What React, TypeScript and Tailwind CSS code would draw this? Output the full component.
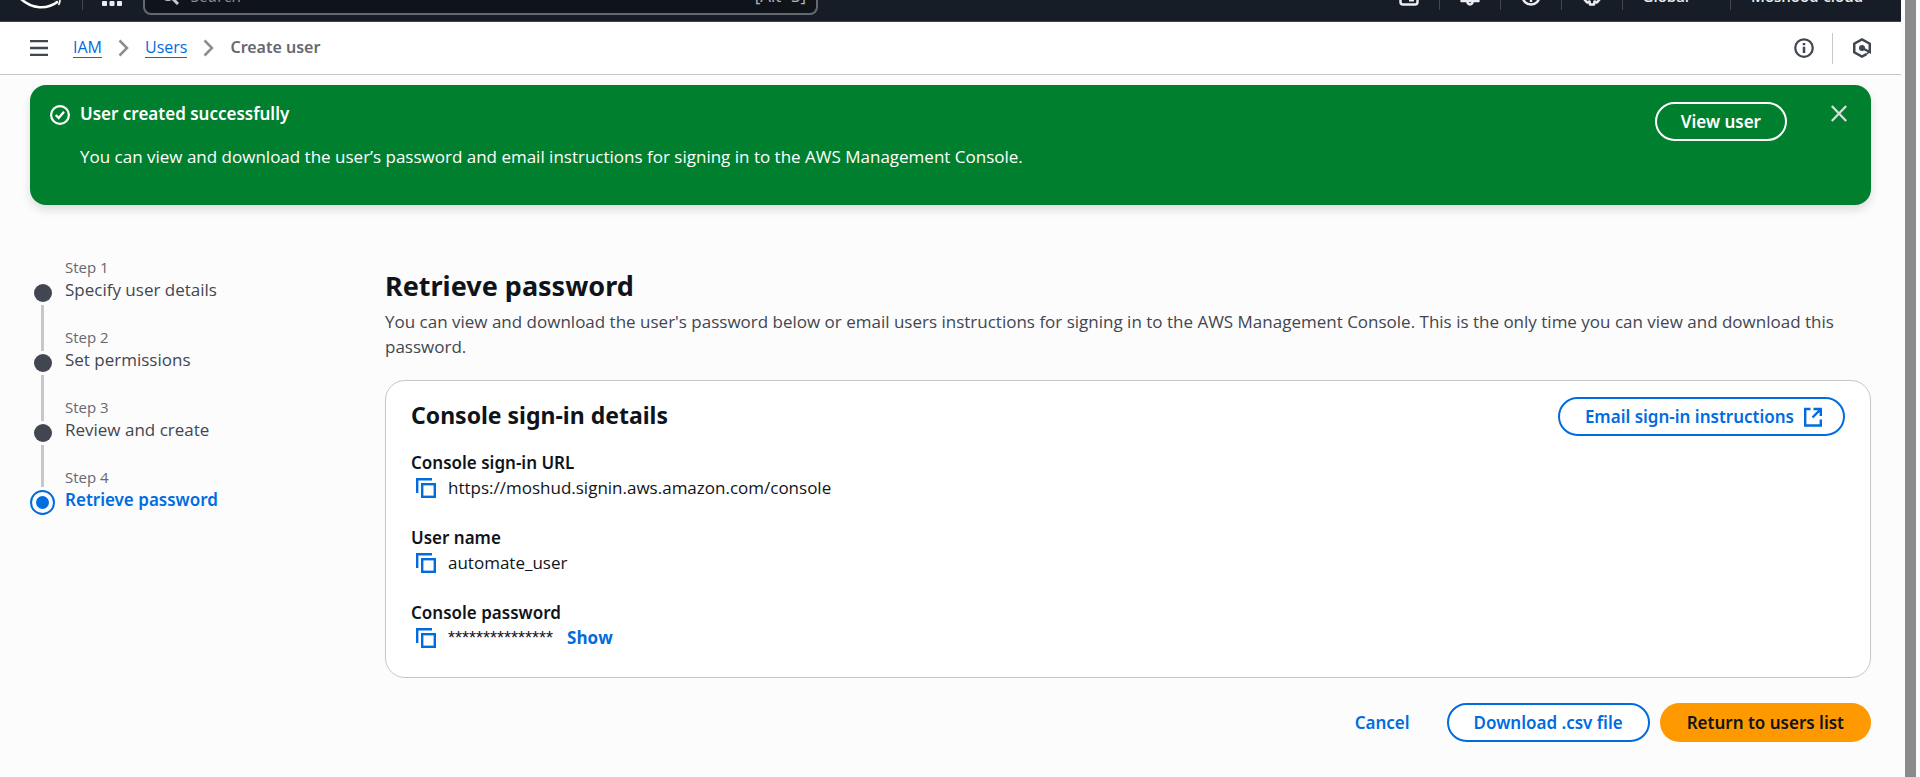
import React from "react";
import type { ReactNode } from "react";

const steps = ["Specify user details", "Set permissions", "Review and create", "Retrieve password"];
const activeStep = 3;

function TopIcon({ children }: { children: ReactNode }) {
  return (
    <svg
      className="shrink-0"
      width="20"
      height="20"
      viewBox="0 0 20 20"
      fill="none"
      stroke="#ebebf0"
      strokeWidth="2.5"
      strokeLinejoin="round"
      aria-hidden="true"
    >
      {children}
    </svg>
  );
}

function Divider() {
  return <span className="h-7 w-px shrink-0 bg-[#424650]" />;
}

function Caret() {
  return (
    <svg width="10" height="7" viewBox="0 0 10 7" fill="#b4b4bb" aria-hidden="true">
      <path d="M0 0H10L5 7Z" />
    </svg>
  );
}

function CopyIcon() {
  return (
    <svg width="20" height="20" viewBox="0 0 20 20" fill="none" stroke="currentColor" strokeWidth="2.4" aria-hidden="true">
      <path d="M1.200 15V1.200H16" />
      <rect x="6.200" y="6.200" width="12.600" height="12.600" />
    </svg>
  );
}

function Chevron() {
  return (
    <svg width="11" height="18" viewBox="0 0 11 18" fill="none" stroke="#8c8c94" strokeWidth="2.5" aria-hidden="true">
      <path d="M1.500 1.500L9 9L1.500 16.500" />
    </svg>
  );
}

function TopBar() {
  return (
    <header className="-mt-[29px] flex h-[51px] items-center border-b border-[#424650] bg-[#161d26] pr-5 pl-5 text-[#ebebf0]">
      <a href="#home" aria-label="AWS home" className="shrink-0">
        <svg width="42" height="26" viewBox="0 0 42 26" fill="none" stroke="#fff" aria-hidden="true">
          <path d="M1 16C12 26 27 27 38 18.500" strokeWidth="2.600" />
          <path d="M34 16.500C39 15.500 42 16 38.500 22" strokeWidth="1.600" />
        </svg>
      </a>
      <span className="ml-5 flex">
        <Divider />
      </span>
      <button type="button" aria-label="Services" className="ml-[19px] shrink-0">
        <svg width="20" height="20" viewBox="0 0 20 20" fill="#ebebf0" aria-hidden="true">
          {[0, 7.5, 15].map((y) =>
            [0, 7.5, 15].map((x) => <rect key={`${x}-${y}`} x={x} y={y} width="5" height="5" rx="1" />),
          )}
        </svg>
      </button>
      <label className="ml-[21px] flex h-[38px] w-[675px] items-center gap-3 rounded-lg border-2 border-[#656871] bg-[#0f141a] pr-2.5 pl-4">
        <svg width="18" height="18" viewBox="0 0 18 18" fill="none" stroke="#c6c6cd" strokeWidth="3" aria-hidden="true">
          <circle cx="7" cy="7" r="5.500" />
          <path d="M11 11L17 17" />
        </svg>
        <input
          type="text"
          aria-label="Search"
          placeholder="Search"
          className="min-w-0 grow bg-transparent leading-5 italic outline-none placeholder:text-[#8c8c94]"
        />
        <span className="shrink-0 text-[17px] leading-5 font-medium text-[#b4b4bb]">[Alt+S]</span>
      </label>
      <nav className="ml-auto flex items-center gap-5">
        <TopIcon>
          <rect x="1.500" y="1.500" width="17" height="17" rx="2.500" />
          <path d="M5.500 6L9 9.500L5.500 13M10 14.500H15" strokeWidth="2" />
        </TopIcon>
        <Divider />
        <TopIcon>
          <path d="M1.500 15C4 12 3.500 8 5 5C7 1 13 1 15 5C16.500 8 16 12 18.500 15Z" fill="#ebebf0" />
          <path d="M7 16Q10 21 13 16" />
        </TopIcon>
        <Divider />
        <TopIcon>
          <circle cx="10" cy="10" r="8.500" />
          <path d="M7 8C7 4.500 13 4.500 13 8C13 10 10 9.500 10 12M10 13.500V16" />
        </TopIcon>
        <Divider />
        <TopIcon>
          <path d="M8 1.500H12L12.500 4L15 3.500L17.500 6.500L16 8.500V11.500L17.500 13.500L15 16.500L12.500 15.500L12 18.500H8L7.500 15.500L5 16.500L2.500 13.500L4 11.500V8.500L2.500 6.500L5 3.500L7.500 4Z" />
          <circle cx="10" cy="9" r="2" />
        </TopIcon>
        <Divider />
        <button type="button" className="flex items-center gap-[7px] pr-1 text-[15px] font-semibold">
          Global <Caret />
        </button>
        <Divider />
        <button type="button" className="flex items-center gap-2 text-[15px] font-semibold">
          Moshood-cloud <Caret />
        </button>
      </nav>
    </header>
  );
}

function BreadcrumbBar() {
  return (
    <div className="flex h-[53px] items-center border-b border-[#c6c6cd] bg-white pr-[30px] pl-[30px]">
      <button type="button" aria-label="Open navigation" className="mr-[25px] text-[#424650]">
        <svg width="18" height="16" viewBox="0 0 18 16" fill="currentColor" aria-hidden="true">
          <path d="M0 0H18V2.300H0ZM0 6.850H18V9.150H0ZM0 13.700H18V16H0Z" />
        </svg>
      </button>
      <nav aria-label="Breadcrumb" className="flex items-center gap-4 text-base">
        <a href="#iam" className="border-b border-[#006ce0] leading-[19px] text-[#006ce0]">
          IAM
        </a>
        <Chevron />
        <a href="#users" className="border-b border-[#006ce0] leading-[19px] text-[#006ce0]">
          Users
        </a>
        <Chevron />
        <span className="border-b border-transparent font-['Noto_Sans',sans-serif] leading-[19px] font-semibold text-[#656871]">
          Create user
        </span>
      </nav>
      <div className="ml-auto flex items-center text-[#424650]">
        <button type="button" aria-label="Info">
          <svg width="20" height="20" viewBox="0 0 20 20" fill="none" stroke="currentColor" strokeWidth="2.250" aria-hidden="true">
            <circle cx="10" cy="10" r="8.750" />
            <path d="M10 8.750V15M10 5V7.250" strokeWidth="2.500" />
          </svg>
        </button>
        <span className="mr-5 ml-[18px] h-[31px] w-px bg-[#c6c6cd]" />
        <button type="button" aria-label="Settings">
          <svg width="18" height="20" viewBox="0 0 18 20" fill="none" stroke="currentColor" strokeWidth="2.500" aria-hidden="true">
            <path d="M13.500 16.200L9 18.600L1.250 14.300V5.700L9 1.400L16.750 5.700V14L9 10" />
            <path d="M16.750 13.500L13.500 16.200" strokeWidth="1.500" />
            <circle cx="9" cy="10" r="3" fill="currentColor" stroke="none" />
          </svg>
        </button>
      </div>
    </div>
  );
}

function SuccessBanner() {
  return (
    <section className="flex items-start rounded-2xl bg-[#00802f] pt-4 pr-6 pb-9 pl-5 text-white shadow-[0_5px_10px_rgba(0,7,22,0.12)]">
      <svg className="mt-1 mr-2.5 shrink-0" width="20" height="20" viewBox="0 0 20 20" fill="none" stroke="currentColor" aria-hidden="true">
        <circle cx="10" cy="10" r="8.900" strokeWidth="2.200" />
        <path d="M5.700 10L8.700 13L14 6.800" strokeWidth="2.300" />
      </svg>
      <div className="grow">
        <h2 className="font-['Noto_Sans',sans-serif] font-semibold">User created successfully</h2>
        <p className="mt-[18px]">
          You can view and download the user’s password and email instructions for signing in to the AWS Management Console.
        </p>
      </div>
      <button
        type="button"
        className="mt-px h-[39px] shrink-0 rounded-full border-2 border-white px-6 font-['Noto_Sans',sans-serif] leading-5 font-semibold"
      >
        View user
      </button>
      <button type="button" aria-label="Dismiss" className="mt-1 ml-11 shrink-0">
        <svg width="16" height="17" viewBox="0 0 16 17" fill="none" stroke="#dedee3" strokeWidth="2.200" aria-hidden="true">
          <path d="M0.800 1L15.200 16M15.200 1L0.800 16" />
        </svg>
      </button>
    </section>
  );
}

function Step({ index, title }: { index: number; title: string }) {
  const active = index === activeStep;
  return (
    <li className="flex gap-2.5">
      <div className="flex h-[70px] w-[25px] shrink-0 flex-col items-center">
        <span className={`w-[3px] ${active ? "h-5" : "h-6"} ${index > 0 ? "bg-[#c6c6cd]" : ""}`} />
        {active ? (
          <span className="mt-[3px] flex size-[25px] items-center justify-center rounded-full border-2 border-[#006ce0]">
            <span className="size-[13px] rounded-full bg-[#006ce0]" />
          </span>
        ) : (
          <>
            <span className="my-[3px] size-[18px] shrink-0 rounded-full bg-[#424650]" />
            <span className="w-[3px] grow bg-[#c6c6cd]" />
          </>
        )}
      </div>
      <div>
        <p className="text-[15px] leading-5 text-[#656871]">Step {index + 1}</p>
        <p className={active ? "font-['Noto_Sans',sans-serif] font-semibold text-[#006ce0]" : "text-[#424650]"}>{title}</p>
      </div>
    </li>
  );
}

function Field({ label, children }: { label: string; children: ReactNode }) {
  return (
    <div>
      <dt className="font-['Noto_Sans',sans-serif] font-semibold">{label}</dt>
      <dd className="flex h-[25px] items-center pl-[5px]">
        <button type="button" aria-label={`Copy ${label}`} className="mr-3 shrink-0 text-[#006ce0]">
          <CopyIcon />
        </button>
        {children}
      </dd>
    </div>
  );
}

const outlineButton =
  "flex h-[39px] shrink-0 items-center rounded-full border-2 border-[#006ce0] bg-white px-[25px] font-['Noto_Sans',sans-serif] leading-5 font-semibold text-[#006ce0]";

export default function App() {
  return (
    <div className="flex min-h-screen overflow-hidden bg-[#fcfcfd] font-['Open_Sans','Noto_Sans',sans-serif] text-[17px] leading-[25px] text-[#0f141a]">
      <div className="min-w-0 grow">
        <TopBar />
        <BreadcrumbBar />
        <main className="px-[30px] pt-2.5 pb-8">
          <SuccessBanner />
          <div className="flex pt-[52px]">
            <ol className="w-[355px] shrink-0">
              {steps.map((title, i) => (
                <Step key={title} index={i} title={title} />
              ))}
            </ol>
            <div className="min-w-0 grow pt-[11px]">
              <h1 className="font-['Noto_Sans',sans-serif] text-[27px] leading-9 font-bold">Retrieve password</h1>
              <p className="mt-[5px] text-[#424650]">
                You can view and download the user's password below or email users instructions for signing in to the AWS
                Management Console. This is the only time you can view and download this password.
              </p>
              <section className="mt-[21px] rounded-[20px] border border-[#c6c6cd] bg-white px-[25px] pt-4 pb-[27px]">
                <div className="flex items-start justify-between">
                  <h2 className="font-['Noto_Sans',sans-serif] text-[23px] leading-9 font-bold">Console sign-in details</h2>
                  <button type="button" className={outlineButton}>
                    Email sign-in instructions
                    <svg className="-mr-1 ml-2.5" width="18" height="20" viewBox="0 0 18 20" fill="none" stroke="currentColor" strokeWidth="2.400" aria-hidden="true">
                      <path d="M6.500 2H1.200V18.500H16.800V12.500" />
                      <path d="M9.500 2H16.800V9M16.500 2.400L8.500 10.500" />
                    </svg>
                  </button>
                </div>
                <dl className="mt-3.5 flex flex-col gap-[25px]">
                  <Field label="Console sign-in URL">
                    <span>https://moshud.signin.aws.amazon.com/console</span>
                  </Field>
                  <Field label="User name">
                    <span>automate_user</span>
                  </Field>
                  <Field label="Console password">
                    <span className="font-['Liberation_Sans',sans-serif] text-lg">***************</span>
                    <button type="button" className="ml-3.5 font-bold text-[#006ce0]">
                      Show
                    </button>
                  </Field>
                </dl>
              </section>
              <div className="mt-[25px] flex justify-end gap-2.5 font-['Noto_Sans',sans-serif]">
                <button type="button" className="h-[39px] px-[27px] leading-5 font-semibold text-[#006ce0]">
                  Cancel
                </button>
                <button type="button" className={outlineButton}>
                  Download .csv file
                </button>
                <button type="button" className="h-[39px] rounded-full bg-[#ff9900] px-[27px] leading-5 font-semibold">
                  Return to users list
                </button>
              </div>
            </div>
          </div>
        </main>
      </div>
      <div className="flex w-[19px] shrink-0 px-1">
        <div className="grow bg-[#8b8b8b]" />
      </div>
    </div>
  );
}
